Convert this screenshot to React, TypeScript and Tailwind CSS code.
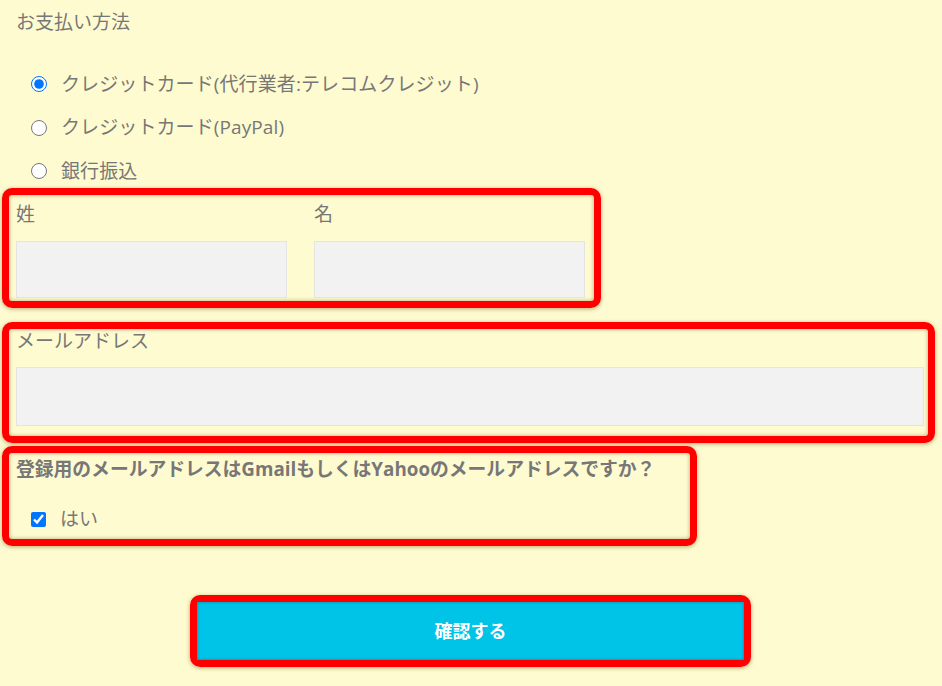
import { useState } from "react"

const methods = [
  "クレジットカード(代行業者:テレコムクレジット)",
  "クレジットカード(PayPal)",
  "銀行振込",
]

// red annotation frame around a block of the form
const frame =
  "border-[7px] border-[#ff0000] rounded-[10px] shadow-[0_1px_4px_rgba(90,70,0,0.45),inset_0_0_4px_rgba(90,70,0,0.45)]"

const field = "block bg-[#f2f2f2] border border-[#e4e4e0] outline-none"

export default function App() {
  const [method, setMethod] = useState(0)
  const [yes, setYes] = useState(true)

  return (
    <div
      className="min-h-screen bg-[#fffbd0] pt-[8px] px-[2px] text-[#777777]"
      style={{ fontFamily: '"Open Sans", "Noto Sans CJK JP", sans-serif' }}
    >
      <p className="pl-[14px] text-[19px] leading-[28px]">お支払い方法</p>

      {/* payment methods */}
      <div className="mt-[34px] pl-[29px] flex flex-col gap-[15.5px]">
        {methods.map((m, i) => (
          <label key={m} className="flex items-center h-[28px] gap-[14px] text-[19px] tracking-[0.1px] cursor-pointer">
            <input
              type="radio"
              name="pay"
              checked={method === i}
              onChange={() => setMethod(i)}
              className="m-0 w-[16px] h-[16px]"
            />
            <span>{m}</span>
          </label>
        ))}
      </div>

      {/* name */}
      <div className={`mt-[3px] w-[599px] h-[120px] ${frame} pl-[7px] pt-[5px]`}>
        <div className="grid grid-cols-[271px_271px] gap-x-[27px]">
          <span className="text-[19px] leading-[28px]">姓</span>
          <span className="text-[19px] leading-[28px]">名</span>
          <input className={`${field} mt-[13px] h-[57px] w-[271px]`} />
          <input className={`${field} mt-[13px] h-[57px] w-[271px]`} />
        </div>
      </div>

      {/* mail */}
      <div className={`mt-[14px] w-[933px] h-[121px] ${frame} pl-[7px]`}>
        <p className="text-[19px] leading-[24px]">メールアドレス</p>
        <input className={`${field} mt-[14px] h-[59px] w-[908px]`} />
      </div>

      {/* gmail / yahoo */}
      <div className={`mt-[3px] w-[695px] h-[100px] ${frame} pl-[7px] pt-[4px]`}>
        <p className="text-[18.8px] leading-[24px] font-bold">
          登録用のメールアドレスはGmailもしくはYahooのメールアドレスですか？
        </p>
        <label className="mt-[24px] pl-[15px] flex items-center h-[28px] gap-[14px] text-[19px] cursor-pointer">
          <input
            type="checkbox"
            checked={yes}
            onChange={() => setYes(!yes)}
            className="m-0 w-[15px] h-[15px]"
          />
          <span>はい</span>
        </label>
      </div>

      {/* submit */}
      <div className={`mt-[49px] ml-[188px] w-[561px] h-[72px] ${frame}`}>
        <button className="w-full h-full bg-[#00c3e8] text-white font-bold text-[18px] shadow-[inset_0_0_3px_rgba(0,60,80,0.5)]">
          確認する
        </button>
      </div>
    </div>
  )
}
